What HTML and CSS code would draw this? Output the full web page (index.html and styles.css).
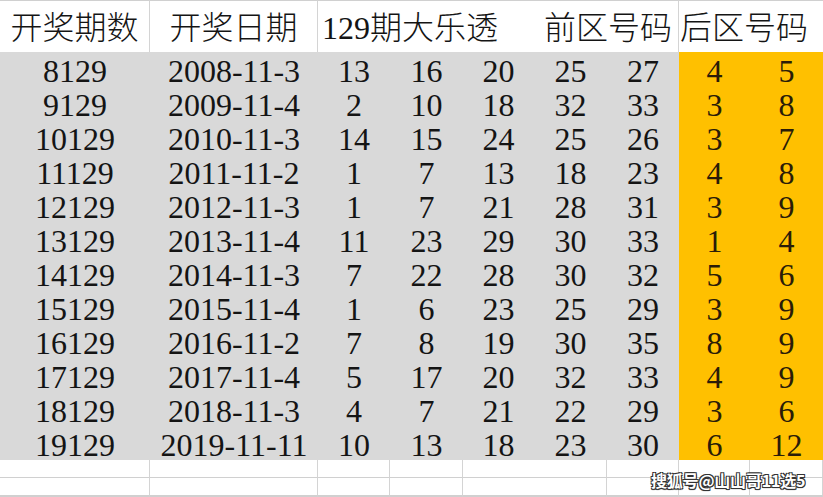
FILE: index.html
```html
<!DOCTYPE html>
<html lang="zh-CN">
<head>
<meta charset="utf-8">
<title>129期大乐透</title>
<link rel="stylesheet" href="styles.css">
</head>
<body>
<div class="sheet">
  <div class="h hA">开奖期数</div>
  <div class="h hB">开奖日期</div>
  <div class="h hC"><span>129期大乐透</span><span>前区号码</span></div>
  <div class="h hH">后区号码</div>

  <div class="c">8129</div><div class="c">2008-11-3</div><div class="c">13</div><div class="c">16</div><div class="c">20</div><div class="c">25</div><div class="c">27</div><div class="c o">4</div><div class="c o">5</div>
  <div class="c">9129</div><div class="c">2009-11-4</div><div class="c">2</div><div class="c">10</div><div class="c">18</div><div class="c">32</div><div class="c">33</div><div class="c o">3</div><div class="c o">8</div>
  <div class="c">10129</div><div class="c">2010-11-3</div><div class="c">14</div><div class="c">15</div><div class="c">24</div><div class="c">25</div><div class="c">26</div><div class="c o">3</div><div class="c o">7</div>
  <div class="c">11129</div><div class="c">2011-11-2</div><div class="c">1</div><div class="c">7</div><div class="c">13</div><div class="c">18</div><div class="c">23</div><div class="c o">4</div><div class="c o">8</div>
  <div class="c">12129</div><div class="c">2012-11-3</div><div class="c">1</div><div class="c">7</div><div class="c">21</div><div class="c">28</div><div class="c">31</div><div class="c o">3</div><div class="c o">9</div>
  <div class="c">13129</div><div class="c">2013-11-4</div><div class="c">11</div><div class="c">23</div><div class="c">29</div><div class="c">30</div><div class="c">33</div><div class="c o">1</div><div class="c o">4</div>
  <div class="c">14129</div><div class="c">2014-11-3</div><div class="c">7</div><div class="c">22</div><div class="c">28</div><div class="c">30</div><div class="c">32</div><div class="c o">5</div><div class="c o">6</div>
  <div class="c">15129</div><div class="c">2015-11-4</div><div class="c">1</div><div class="c">6</div><div class="c">23</div><div class="c">25</div><div class="c">29</div><div class="c o">3</div><div class="c o">9</div>
  <div class="c">16129</div><div class="c">2016-11-2</div><div class="c">7</div><div class="c">8</div><div class="c">19</div><div class="c">30</div><div class="c">35</div><div class="c o">8</div><div class="c o">9</div>
  <div class="c">17129</div><div class="c">2017-11-4</div><div class="c">5</div><div class="c">17</div><div class="c">20</div><div class="c">32</div><div class="c">33</div><div class="c o">4</div><div class="c o">9</div>
  <div class="c">18129</div><div class="c">2018-11-3</div><div class="c">4</div><div class="c">7</div><div class="c">21</div><div class="c">22</div><div class="c">29</div><div class="c o">3</div><div class="c o">6</div>
  <div class="c">19129</div><div class="c">2019-11-11</div><div class="c">10</div><div class="c">13</div><div class="c">18</div><div class="c">23</div><div class="c">30</div><div class="c o">6</div><div class="c o">12</div>

  <div class="e"></div><div class="e"></div><div class="e"></div><div class="e"></div><div class="e"></div><div class="e"></div><div class="e"></div><div class="e"></div><div class="e"></div>
  <div class="e"></div><div class="e"></div><div class="e"></div><div class="e"></div><div class="e"></div><div class="e"></div><div class="e"></div><div class="e"></div><div class="e"></div>
  <div class="e"></div><div class="e"></div><div class="e"></div><div class="e"></div><div class="e"></div><div class="e"></div><div class="e"></div><div class="e"></div><div class="e"></div>

  <div class="mark">搜狐号@山山哥11选5</div>
</div>
</body>
</html>
```

FILE: styles.css
```css
html, body {
  margin: 0;
  padding: 0;
  background: #ffffff;
}

.sheet {
  position: relative;
  width: 823px;
  height: 497px;
  overflow: hidden;
  display: grid;
  grid-template-columns: 150px 168px 72px 73px 71px 73px 72px 71px 73px;
  grid-template-rows: 52px repeat(12, 34px) 18px 18px 1fr;
  font-family: "Liberation Serif", "Noto Sans CJK SC", serif;
  color: #141414;
}

.h {
  box-sizing: border-box;
  border-top: 1px solid #d0d0d0;
  border-right: 1px solid #d4d4d4;
  font-size: 32px;
  font-weight: 300;
  line-height: 48px;
  padding-top: 3px;
  text-align: center;
  white-space: nowrap;
  background: #ffffff;
}

.hC {
  grid-column: span 5;
  display: flex;
  justify-content: space-between;
  padding: 3px 6px 0 4px;
}

.hH {
  grid-column: span 2;
  border-right: none;
  text-align: left;
  padding-left: 1px;
}

.c {
  box-sizing: border-box;
  background: #d9d9d9;
  font-size: 32px;
  line-height: 30px;
  padding-top: 4px;
  text-align: center;
  white-space: nowrap;
}

.c.o {
  background: #ffc000;
  color: #2a1c08;
}

.e {
  box-sizing: border-box;
  border-right: 1px solid #d4d4d4;
  border-bottom: 1px solid #d0d0d0;
}

.e:nth-child(9n) {
  border-right: none;
}

.mark {
  position: absolute;
  left: 651px;
  top: 470px;
  font-family: "Noto Sans CJK SC", sans-serif;
  font-weight: 700;
  font-size: 16px;
  line-height: 20px;
  color: #ffffff;
  letter-spacing: -0.2px;
  text-shadow: 1px 1px 0 #333, -1px -1px 0 #333, 1px -1px 0 #333, -1px 1px 0 #333, 0 1px 1px #222;
}
```
